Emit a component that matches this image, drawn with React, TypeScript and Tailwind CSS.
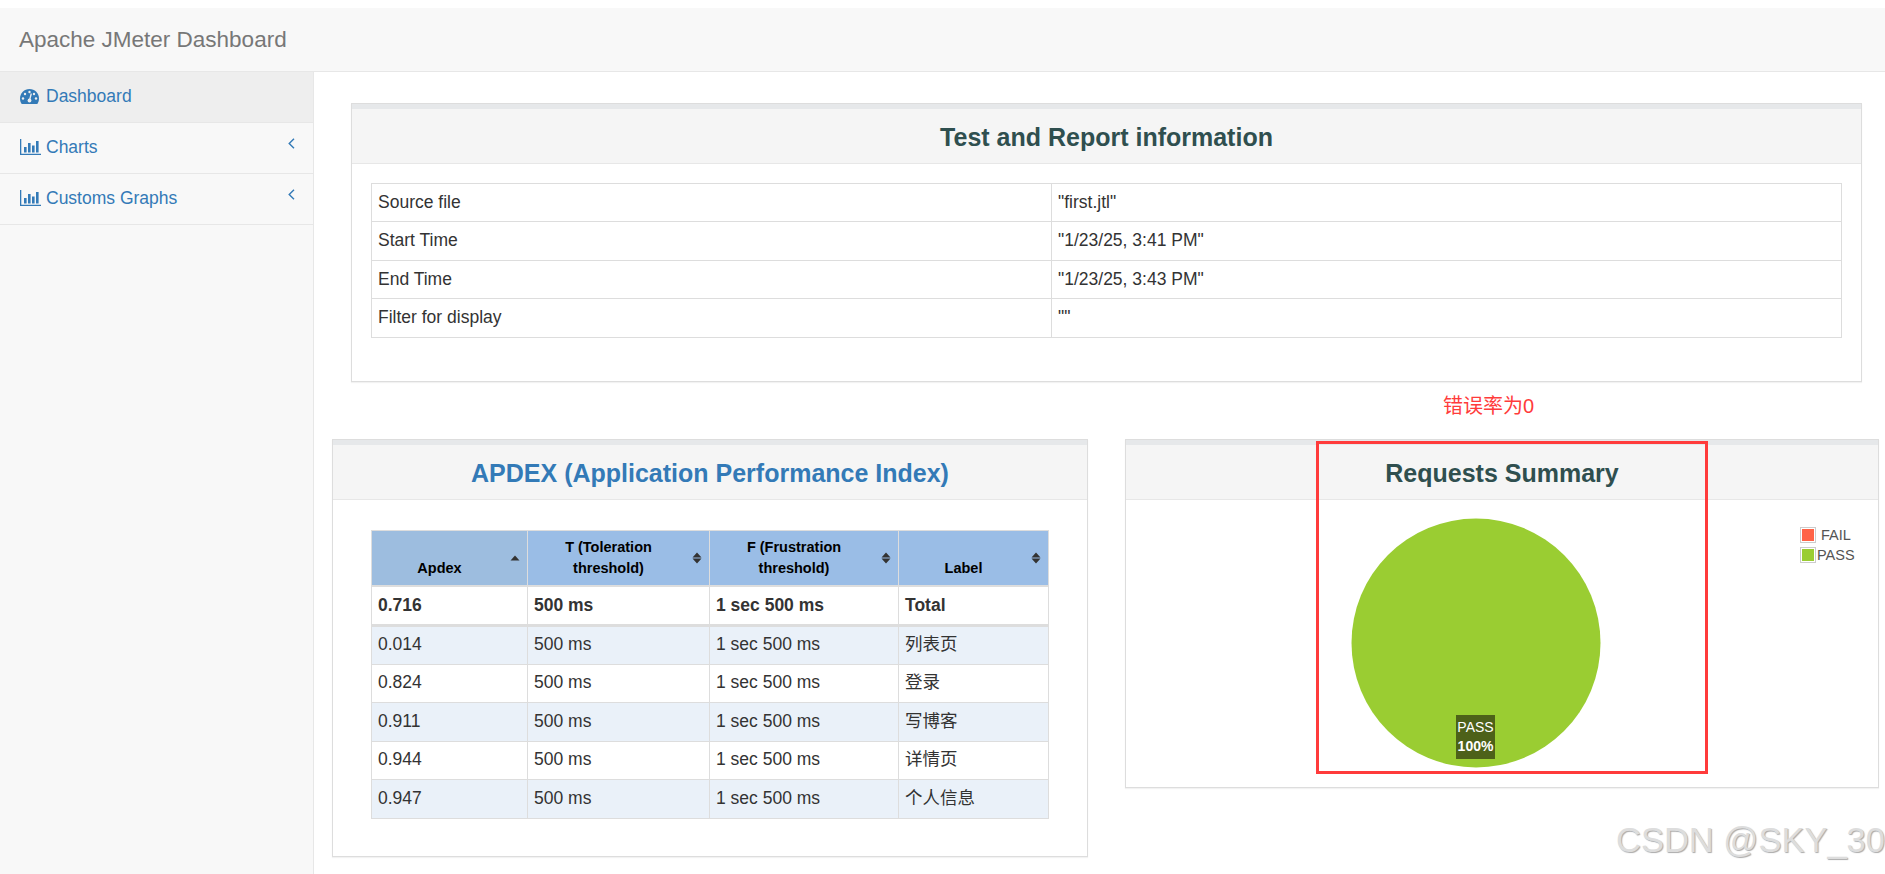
const infoRows = [
  ['Source file', '"first.jtl"'],
  ['Start Time', '"1/23/25, 3:41 PM"'],
  ['End Time', '"1/23/25, 3:43 PM"'],
  ['Filter for display', '""'],
];

const apdexRows = [
  ['0.014', '列表页'],
  ['0.824', '登录'],
  ['0.911', '写博客'],
  ['0.944', '详情页'],
  ['0.947', '个人信息'],
];

const panel = 'border border-[#ddd] bg-white shadow-[0_1px_1px_rgba(0,0,0,0.05)]';
const cell = 'border border-[#ddd] px-[6px]';
const headCell = 'relative border border-[#ddd] border-b-[2px] align-bottom pb-[6px] pl-[4px] pr-[24px] leading-[21px]';

function GaugeIcon() {
  return (
    <svg viewBox="0 0 19 15" className="w-[19px] h-[15px]">
      <path fill="#337ab7" d="M9.500 0C4.250 0 0 4.250 0 9.500c0 2 .6 3.900 1.700 5.500h15.600c1.100-1.600 1.700-3.500 1.700-5.500C19 4.250 14.750 0 9.500 0z" />
      <g fill="#eee">
        <circle cx="3" cy="9.500" r="1.200" />
        <circle cx="5" cy="5" r="1.200" />
        <circle cx="9.500" cy="3" r="1.200" />
        <circle cx="14" cy="5" r="1.200" />
        <circle cx="16" cy="9.500" r="1.200" />
        <circle cx="9.500" cy="11.500" r="1.900" />
      </g>
      <path stroke="#eee" strokeWidth="1.300" d="M9.500 11.500L11.300 4.500" />
    </svg>
  );
}

function BarsIcon() {
  return (
    <svg viewBox="0 0 21 16" className="w-[21px] h-[16px] fill-[#337ab7]">
      <path d="M0 0h1.300v14.700H21V16H0z" />
      <path d="M4 8h2.600v5.500H4zM8 4h2.600v9.500H8zM12 6.500h2.600v7H12zM16 2h2.600v11.500H16z" />
    </svg>
  );
}

function ChevronLeft() {
  return (
    <svg viewBox="0 0 7 11" className="ml-auto mr-[18px] -mt-[8px] w-[7px] h-[11px] fill-none stroke-[#337ab7] stroke-[1.400]">
      <path d="M6 .7L1.200 5.500 6 10.300" />
    </svg>
  );
}

function SortIcon({ up }: { up?: boolean }) {
  return (
    <svg viewBox="0 0 10 12" className="absolute right-[7px] top-1/2 -translate-y-1/2 w-[10px] h-[12px] fill-[#333]">
      {up ? <path d="M5 3.500l4.500 5h-9z" /> : <path d="M5 .5l4.500 5h-9zM5 11.500l4.500-5h-9z" />}
    </svg>
  );
}

function NavItem({ label, active, arrow, icon }: { label: string; active?: boolean; arrow?: boolean; icon: React.ReactNode }) {
  return (
    <div className={`h-[51px] flex items-center pl-[20px] pb-[2px] border-b border-[#e7e7e7] text-[#337ab7] text-[17.500px] ${active ? 'bg-[#eee]' : ''}`}>
      <span className="w-[26px] flex">{icon}</span>
      <span>{label}</span>
      {arrow && <ChevronLeft />}
    </div>
  );
}

function PanelHeader({ title, color }: { title: string; color: string }) {
  return (
    <>
      <div className="h-[5px] bg-[#e6e8ea]" />
      <div className={`h-[55px] pt-[4px] bg-[#f5f5f5] border-b border-[#e7e7e7] flex items-center justify-center text-[25px] font-bold ${color}`}>
        {title}
      </div>
    </>
  );
}

function LegendRow({ label, swatch, gap }: { label: string; swatch: string; gap: string }) {
  return (
    <div className="flex items-center">
      <span className="w-[16px] h-[16px] border border-[#ccc] p-[1px] flex"><span className={`flex-1 ${swatch}`} /></span>
      <span className={gap}>{label}</span>
    </div>
  );
}

export default function App() {
  return (
    <div className="h-screen overflow-hidden pt-[8px] bg-white text-[#333] font-['Liberation_Sans','Noto_Sans_CJK_SC',sans-serif] relative">
      <div className="h-[64px] bg-[#f8f8f8] border-b border-[#e7e7e7] flex items-center pl-[19px] text-[22.500px] text-[#777]">
        Apache JMeter Dashboard
      </div>

      <div className="flex h-[802px]">
        <div className="w-[314px] shrink-0 bg-[#f8f8f8] border-r border-[#e7e7e7]">
          <NavItem label="Dashboard" active icon={<GaugeIcon />} />
          <NavItem label="Charts" arrow icon={<BarsIcon />} />
          <NavItem label="Customs Graphs" arrow icon={<BarsIcon />} />
        </div>

        <div className="flex-1 pt-[31px] pl-[18px] pr-[6px]">
          {/* Test and Report information */}
          <div className={`ml-[19px] mr-[17px] h-[279px] ${panel}`}>
            <PanelHeader title="Test and Report information" color="text-[#2f4f4f]" />
            <div className="pt-[19px] px-[19px]">
              <table className="w-full border-collapse text-[17.500px]">
                <tbody>
                  {infoRows.map(([name, value], i) => (
                    <tr key={name} className={i % 2 === 0 ? 'h-[38px]' : 'h-[39px]'}>
                      <td className={`${cell} w-[680px] align-top pt-[5px]`}>{name}</td>
                      <td className={`${cell} align-top pt-[5px]`}>{value}</td>
                    </tr>
                  ))}
                </tbody>
              </table>
            </div>
          </div>

          <div className="h-[57px] pb-[10px] pl-[800px] flex items-center justify-center text-[20px] text-[#ff3b3b]">
            <span className="ml-[-34px]">错误率为0</span>
          </div>

          <div className="grid grid-cols-[756px_1fr] gap-[37px] items-start">
            {/* APDEX */}
            <div className={`h-[418px] ${panel}`}>
              <PanelHeader title="APDEX (Application Performance Index)" color="text-[#337ab7]" />
              <div className="pt-[30px] px-[38px]">
                <table className="w-full border-collapse table-fixed text-[17.500px]">
                  <thead>
                    <tr className="h-[55px] bg-[#9ABDE6] text-black text-[14.500px] font-bold">
                      <th className={`${headCell} w-[156px] bg-[#9DBDDF]`}>Apdex<SortIcon up /></th>
                      <th className={`${headCell} w-[182px]`}>T (Toleration threshold)<SortIcon /></th>
                      <th className={`${headCell} w-[189px]`}>F (Frustration threshold)<SortIcon /></th>
                      <th className={headCell}>Label<SortIcon /></th>
                    </tr>
                  </thead>
                  <tbody>
                    <tr className="h-[40px] font-bold border-b-[3px] border-[#ddd]">
                      <td className={cell}>0.716</td>
                      <td className={cell}>500 ms</td>
                      <td className={cell}>1 sec 500 ms</td>
                      <td className={cell}>Total</td>
                    </tr>
                    {apdexRows.map(([score, label], i) => (
                      <tr key={score} className={`h-[38.500px] ${i % 2 === 0 ? 'bg-[#eaf1f9]' : 'bg-white'}`}>
                        <td className={`${cell} pb-[2px]`}>{score}</td>
                        <td className={`${cell} pb-[2px]`}>500 ms</td>
                        <td className={`${cell} pb-[2px]`}>1 sec 500 ms</td>
                        <td className={`${cell} pb-[2px]`}>{label}</td>
                      </tr>
                    ))}
                  </tbody>
                </table>
              </div>
            </div>

            {/* Requests Summary */}
            <div className={`h-[349px] ${panel}`}>
              <PanelHeader title="Requests Summary" color="text-[#2f4f4f]" />
              <div className="relative h-[288px]">
                <svg viewBox="0 0 250 250" className="absolute left-[225px] top-[18px] w-[250px] h-[250px]">
                  <circle cx="125" cy="125" r="124.500" fill="#9acd32" />
                </svg>
                <div className="absolute left-[330px] top-[215px] w-[39px] h-[44px] bg-[#4d6119] text-white text-[14px] leading-[19px] text-center py-[3px]">
                  PASS<br /><b>100%</b>
                </div>
                <div className="absolute left-[674px] top-[25px] text-[14.500px] text-[#545454] leading-[20px]">
                  <LegendRow label="FAIL" swatch="bg-[#ff6347]" gap="ml-[5px]" />
                  <LegendRow label="PASS" swatch="bg-[#9acd32]" gap="ml-[1px]" />
                </div>
              </div>
            </div>
          </div>
        </div>
      </div>

      {/* annotation drawn over the screenshot */}
      <div className="absolute left-[1316px] top-[441px] w-[392px] h-[333px] border-[3px] border-[#ff3b3b]" />
      <div className="absolute right-[0px] top-[823px] text-[34.500px] text-[#ddd] leading-none [text-shadow:1px_1px_1px_#aaa]">CSDN @SKY_30</div>
    </div>
  );
}
